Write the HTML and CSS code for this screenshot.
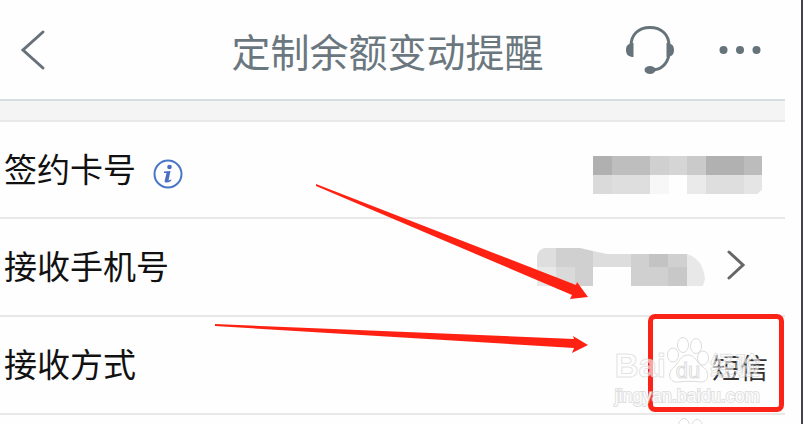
FILE: index.html
```
<!DOCTYPE html>
<html lang="zh-CN">
<head>
    <meta charset="UTF-8">
    <meta name="viewport" content="width=device-width, initial-scale=1.0">
    <title>定制余额变动提醒</title>
    <link rel="stylesheet" href="styles.css">
</head>
<body>
    <div class="page">
        <header>
            <button class="back" aria-label="返回">
                <svg width="32" height="42" viewBox="0 0 32 42"><path d="M29 3 L9 21 L29 39"/></svg>
            </button>
            <h1>定制余额变动提醒</h1>
            <div class="actions">
                <button aria-label="客服">
                    <svg width="50" height="50" viewBox="0 0 50 50">
                        <path class="line" d="M6 21 C6 9 14 2.500 25 2.500 C36 2.500 44 9 44 21 M44 30 C42 39 36 45 26 45"/>
                        <path class="solid" d="M8.500 18 V32 C4 32 1 30 1 25 C1 20 4 18 8.500 18 Z M41.500 18 C46 18 49 20 49 25 C49 30 46 32 41.500 32 Z"/>
                        <ellipse class="solid" cx="25" cy="45" rx="5.500" ry="4"/>
                    </svg>
                </button>
                <button aria-label="更多">
                    <svg width="42" height="10" viewBox="0 0 42 10">
                        <g class="solid"><circle cx="4.500" cy="5" r="4"/><circle cx="21" cy="5" r="4"/><circle cx="37.500" cy="5" r="4"/></g>
                    </svg>
                </button>
            </div>
        </header>

        <main>
            <div class="row">
                <span class="label">签约卡号</span>
                <button class="info" aria-label="说明">
                    <svg width="30" height="30" viewBox="0 0 30 30">
                        <circle class="ring" cx="15" cy="15" r="13.500"/>
                        <circle class="mark" cx="16.500" cy="8" r="2.300"/>
                        <path class="mark" d="M11 12.500 L17.500 12 L15.500 21.500 L18.500 20.500 L18 22 Q15 24 12.500 23.500 L11.500 22.500 L13.500 14 L11 14 Z"/>
                    </svg>
                </button>
                <!-- masked card number -->
                <svg class="mask card" width="170" height="38" viewBox="0 0 170 38" shape-rendering="crispEdges">
                    <rect x="0" y="0" width="19" height="19" fill="#b0b0b0"/>
                    <rect x="19" y="0" width="38" height="19" fill="#bebebe"/>
                    <rect x="57" y="0" width="19" height="19" fill="#d0d0d0"/>
                    <rect x="76" y="0" width="18" height="19" fill="#d5d5d5"/>
                    <rect x="94" y="0" width="19" height="19" fill="#cacaca"/>
                    <rect x="113" y="0" width="38" height="19" fill="#b1b1b1"/>
                    <rect x="151" y="0" width="18" height="19" fill="#bcbcbc"/>
                    <rect x="0" y="19" width="19" height="19" fill="#dadada"/>
                    <rect x="19" y="19" width="38" height="19" fill="#dedede"/>
                    <rect x="57" y="19" width="19" height="19" fill="#f7f7f7"/>
                    <rect x="94" y="19" width="19" height="19" fill="#eaeaea"/>
                    <rect x="113" y="19" width="38" height="19" fill="#dedede"/>
                    <path d="M151 19 H169 V34 L164 38 H151 Z" fill="#e5e5e5"/>
                </svg>
            </div>

            <div class="row">
                <span class="label">接收手机号</span>
                <!-- masked phone number -->
                <svg class="mask" width="168" height="38" viewBox="0 0 168 38">
                    <path d="M0 38 V9 Q1 1 8 0 H19 V38 Z" fill="#dedede"/>
                    <rect x="0" y="19" width="19" height="19" fill="#e8e8e8"/>
                    <path d="M19 0 H43 L56 3 V38 H19 Z" fill="#d0d0d0"/>
                    <rect x="19" y="19" width="19" height="19" fill="#dadada"/>
                    <path d="M56 3 L70 6 H94 V19 H56 Z" fill="#dddddd"/>
                    <rect x="94" y="6" width="56" height="32" fill="#d0d0d0"/>
                    <rect x="112" y="6" width="19" height="13" fill="#c3c3c3"/>
                    <rect x="131" y="19" width="19" height="19" fill="#c8c8c8"/>
                    <path d="M150 6 Q166 11 168 31 L166 38 H150 Z" fill="#e8e8e8"/>
                </svg>
                <button class="next" aria-label="修改手机号">
                    <svg width="20" height="30" viewBox="0 0 20 30"><path d="M3 2 L17 15 L3 28"/></svg>
                </button>
            </div>

            <div class="row">
                <span class="label">接收方式</span>
                <span class="value">短信</span>
                <div class="highlight"></div>
                <div class="watermark">
                    <div class="brand">
                        <span>Bai</span>
                        <svg width="44" height="50" viewBox="0 0 44 50">
                            <ellipse cx="17" cy="10" rx="5.500" ry="7.500"/>
                            <ellipse cx="30" cy="11" rx="5.500" ry="7.500"/>
                            <ellipse cx="7" cy="20" rx="5.500" ry="7"/>
                            <ellipse cx="37" cy="23" rx="5.500" ry="7"/>
                            <path d="M22 20 C30 20 31 29 37 32 C45 38 42 48 34 47 C28 46 18 46 12 47 C4 48 0 39 8 32 C13 28 14 20 22 20 Z"/>
                            <text x="22" y="43" text-anchor="middle">du</text>
                        </svg>
                        <span class="cn">经验</span>
                    </div>
                    <div class="site">jingyan.baidu.com</div>
                    <svg class="paw" width="44" height="20" viewBox="0 0 44 20">
                        <ellipse cx="17" cy="10" rx="5.500" ry="7.500"/>
                        <ellipse cx="30" cy="11" rx="5.500" ry="7.500"/>
                    </svg>
                </div>
            </div>
        </main>

        <svg class="arrows" width="600" height="360" viewBox="0 0 600 360">
            <polygon points="316,184 576,285 577,282 588,297 570,299 572,295 316,186"/>
            <polygon points="215,324 574,339 573,336 588,345 572,353 574,348 215,326"/>
        </svg>
    </div>
</body>
</html>
```
FILE: styles.css
```
body {
    margin: 0;
    font-family: "Noto Sans CJK SC", sans-serif;
    background-color: #fefefe;
    color: #111;
}

button {
    padding: 0;
    border: none;
    background: none;
    cursor: pointer;
}

svg { display: block; }

.page {
    position: relative;
    min-height: 100vh;
    box-sizing: border-box;
    padding-right: 16px;
    border-right: 2px solid #45434a;
    overflow: hidden;
}

header {
    display: grid;
    grid-template-columns: 1fr auto 1fr;
    align-items: center;
    height: 99px;
    padding: 0 24px 0 14px;
    border-bottom: 2px solid #d5dfdf;
}

h1 {
    margin: 0;
    font-size: 39px;
    line-height: 48px;
    font-weight: 400;
    color: #6b777e;
}

.back { justify-self: start; }

.back path, .next path {
    fill: none;
    stroke: #68717a;
    stroke-width: 3;
    stroke-linecap: round;
}

.actions {
    display: flex;
    align-items: center;
    justify-content: flex-end;
    gap: 44px;
}

.line { fill: none; stroke: #66737b; stroke-width: 3; }
.solid { fill: #66737b; }

main {
    border-top: 19px solid #f4f4f4;
}

.row {
    position: relative;
    display: flex;
    align-items: center;
    height: 96px;
    padding: 0 17px 0 4px;
    border-bottom: 2px solid #e8e8e8;
}

.row:first-child {
    height: 95px;
    border-top: 2px solid #e8e8e8;
}

.label {
    padding-bottom: 4px;
    font-size: 33px;
    line-height: 48px;
}

.info { margin: 8px 0 0 17px; }
.ring { fill: none; stroke: #4a76c8; stroke-width: 2; }
.mark { fill: #4a6fc0; }

.mask { margin-left: auto; }
.card { margin-top: 10px; margin-right: 5px; }

.next { margin: 0 22px 4px 21px; }
.next path { stroke: #666; }

.value {
    margin-left: auto;
    padding-top: 4px;
    font-size: 28px;
    line-height: 40px;
    color: #333;
}

/* overlays */
.highlight {
    position: absolute;
    top: -3px;
    right: 1px;
    bottom: 1px;
    width: 126px;
    border: 5px solid #fb2318;
    border-radius: 7px;
}

.watermark {
    position: absolute;
    top: 18px;
    right: 25px;
    color: rgba(255, 255, 255, 0.6);
    font-family: "Liberation Sans", "Noto Sans CJK SC", sans-serif;
    -webkit-text-stroke: 1px rgba(208, 208, 208, 0.6);
}

.brand {
    display: flex;
    align-items: flex-end;
    height: 50px;
    font-size: 33px;
    line-height: 38px;
    font-weight: bold;
}

.brand .cn { font-size: 25px; }
.watermark svg { fill: rgba(255, 255, 255, 0.6); stroke: rgba(205, 205, 205, 0.7); }
.brand text { font-size: 22px; font-weight: normal; }

.site {
    font-size: 18px;
    line-height: 22px;
    color: rgba(255, 255, 255, 0.9);
    paint-order: stroke;
    -webkit-text-stroke: 2px rgba(205, 205, 205, 0.6);
}

.paw { margin: 9px 0 0 52px; }

.arrows {
    position: absolute;
    top: 0;
    left: 0;
    fill: #ff2213;
    pointer-events: none;
}
```
